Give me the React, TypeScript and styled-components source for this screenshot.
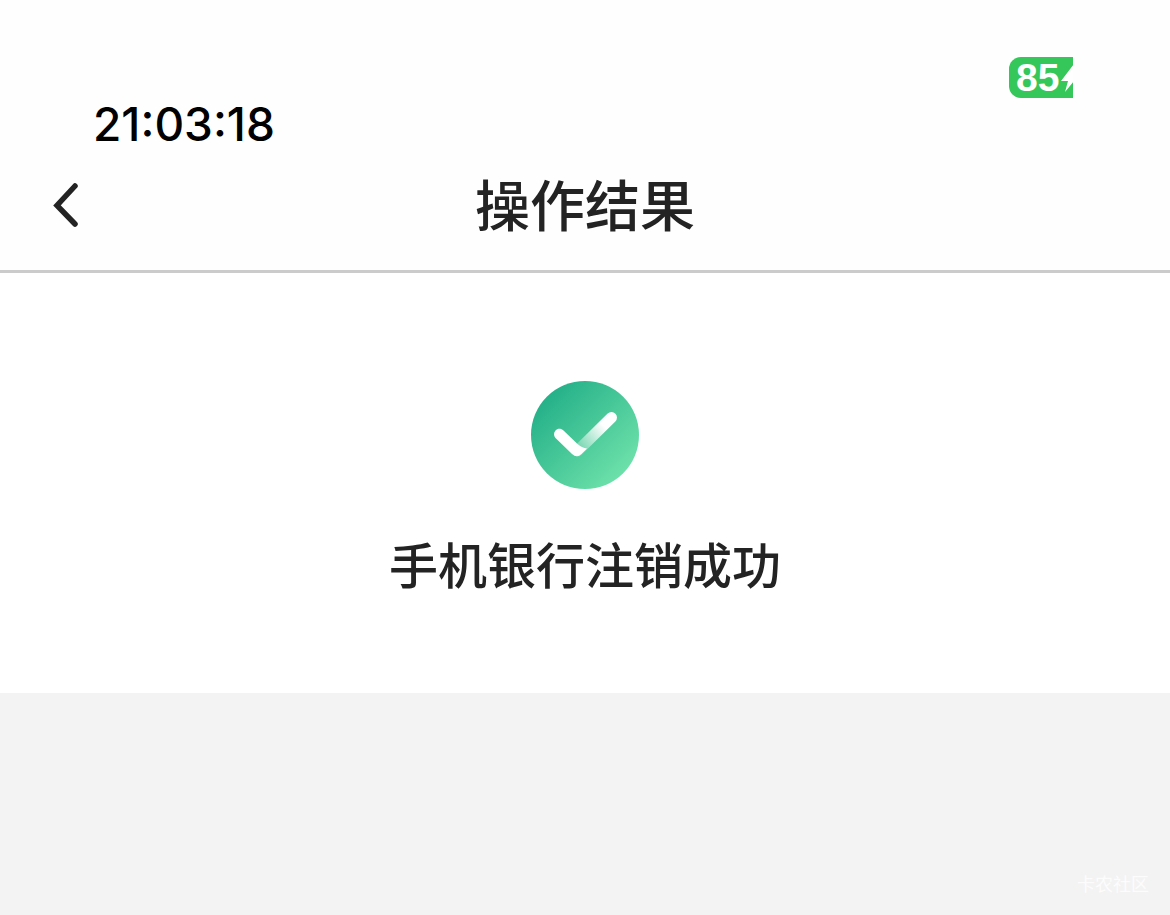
import React from "react";
import styled, { createGlobalStyle } from "styled-components";

const GlobalStyle = createGlobalStyle`
  * { box-sizing: border-box; }
  body {
    margin: 0;
    background: #f3f3f3;
    color: #232323;
    font-family: Inter, "Noto Sans CJK SC", sans-serif;
  }
`;

const Page = styled.div`
  min-height: 100vh;
  display: flex;
  flex-direction: column;
`;

const StatusBar = styled.header`
  display: flex;
  justify-content: space-between;
  align-items: flex-start;
  padding: 57px 97px 0 93px;
  background: #fefefe;
`;

const Clock = styled.time`
  margin-top: 37px;
  font-size: 46px;
  line-height: 60px;
  font-weight: 500;
  color: #000;
`;

const Battery = styled.div`
  display: flex;
  align-items: center;
  width: 64px;
  height: 41px;
  padding-left: 7px;
  overflow: hidden;
  border-radius: 12px 0 0 12px;
  background: #35c759;
  color: #fff;
  font: 700 39px/43px "Liberation Sans", sans-serif;

  svg { flex: none; }
`;

const NavBar = styled.nav`
  display: grid;
  grid-template-columns: 100px 1fr 100px;
  align-items: center;
  height: 119px;
  padding-bottom: 12px;
  border-bottom: 3px solid #cbcbcb;
  background: #fefefe;
`;

const BackButton = styled.button`
  display: flex;
  margin-left: 50px;
  padding: 0;
  border: 0;
  background: none;
  color: #232323;
  cursor: pointer;
`;

const Title = styled.h1`
  margin: 0;
  text-align: center;
  font-size: 55px;
  line-height: 80px;
  font-weight: 500;
`;

const Result = styled.main`
  display: flex;
  flex-direction: column;
  align-items: center;
  gap: 41px;
  padding: 107px 24px 90px;
  background: #fff;
`;

const Message = styled.p`
  margin: 0;
  font-size: 49px;
  line-height: 72px;
  font-weight: 500;
  text-align: center;
`;

const Footer = styled.footer`
  margin-top: auto;
  padding: 0 21px 18px;
  text-align: right;
  font-size: 18px;
  line-height: 24px;
  color: #fcfcfc;
`;

export default function App() {
  return (
    <Page>
      <GlobalStyle />
      <StatusBar>
        <Clock>21:03:18</Clock>
        <Battery>
          85
          <svg width="20" height="30" viewBox="0 0 20 30" aria-hidden="true">
            <path d="M15 1 2 18h7L6 29 20 12h-6z" fill="#fff" />
          </svg>
        </Battery>
      </StatusBar>
      <NavBar>
        <BackButton aria-label="返回">
          <svg width="30" height="46" viewBox="0 0 30 46" aria-hidden="true">
            <path d="M25 3 7 22.500 25 41" fill="none" stroke="currentColor" strokeWidth="5.500" strokeLinecap="round" strokeLinejoin="miter" />
          </svg>
        </BackButton>
        <Title>操作结果</Title>
      </NavBar>
      <Result>
        <svg width="110" height="110" viewBox="0 0 110 110" aria-hidden="true">
          <defs>
            <linearGradient id="disc" x1="0.15" y1="0.15" x2="0.85" y2="0.85">
              <stop offset="0" stopColor="#26b189" />
              <stop offset="1" stopColor="#6ce0a9" />
            </linearGradient>
            <linearGradient id="arm" gradientUnits="userSpaceOnUse" x1="50" y1="70" x2="74" y2="46">
              <stop offset="0" stopColor="#fff" stopOpacity="0.2" />
              <stop offset="1" stopColor="#fff" />
            </linearGradient>
          </defs>
          <circle cx="55" cy="55" r="54" fill="url(#disc)" />
          <path d="M47.500 71 81.500 37.500" fill="none" stroke="url(#arm)" strokeWidth="11" strokeLinecap="round" />
          <path d="M25.500 50.500C27.500 48 31 48 33.500 50.500L47 63.500Q52 68 57 68.500L51.500 74Q47 78.500 42 74L25.500 58C23.500 56 23.500 52.500 25.500 50.500Z" fill="#fff" />
        </svg>
        <Message>手机银行注销成功</Message>
      </Result>
      <Footer>卡农社区</Footer>
    </Page>
  );
}
